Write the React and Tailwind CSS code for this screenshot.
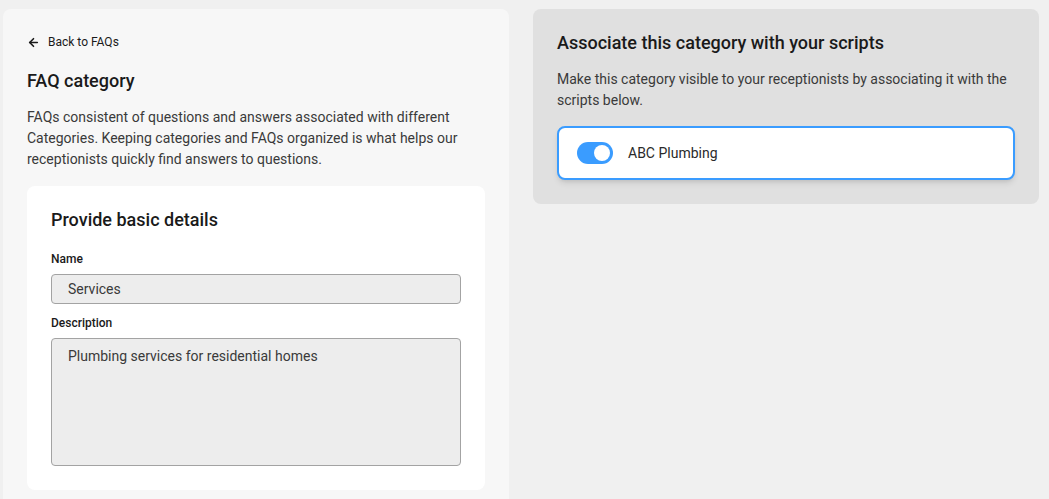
import React from 'react';
import { ArrowLeft } from 'lucide-react';

const Toggle = () => (
  <div className="w-9 h-[22px] rounded-full bg-[#3a9cff] flex items-center justify-end px-[3px]">
    <div className="w-4 h-4 rounded-full bg-white"></div>
  </div>
);

const App = () => {
  return (
    <div className="min-h-screen bg-[#f0f0f0] pl-[3px] pt-[9px] font-['Roboto',sans-serif] text-[#1a1a1a]">
      <div className="flex gap-6 items-start">
        {/* Left panel */}
        <div className="w-[506px] bg-[#f7f7f7] rounded-lg px-6 pt-6 pb-6">
          <button className="flex items-center gap-2 text-xs text-[#1a1a1a] h-[18px]">
            <ArrowLeft size={13} strokeWidth={3} />
            <span>Back to FAQs</span>
          </button>
          <h1 className="mt-[18px] text-lg font-medium leading-6">FAQ category</h1>
          <p className="mt-[14px] text-sm leading-[21px] text-[#3a3a3a]">
            FAQs consistent of questions and answers associated with different Categories. Keeping categories and FAQs organized is what helps our receptionists quickly find answers to questions.
          </p>

          <div className="mt-[16px] bg-white rounded-lg px-6 pt-[22px] pb-6">
            <h2 className="text-lg font-medium leading-6">Provide basic details</h2>
            <label className="block mt-[19px] text-xs font-medium leading-4">Name</label>
            <div className="mt-[7px] h-[30px] bg-[#ededed] border border-[#a3a3a3] rounded flex items-center px-4 text-sm text-[#3a3a3a]">
              Services
            </div>
            <label className="block mt-[11px] text-xs font-medium leading-4">Description</label>
            <div className="mt-[7px] h-[128px] bg-[#ededed] border border-[#a3a3a3] rounded px-4 pt-[7px] text-sm text-[#3a3a3a]">
              Plumbing services for residential homes
            </div>
          </div>
        </div>

        {/* Right panel */}
        <div className="w-[506px] bg-[#e0e0e0] rounded-lg px-6 pt-[22px] pb-6">
          <h2 className="text-lg font-medium leading-6">Associate this category with your scripts</h2>
          <p className="mt-[14px] text-sm leading-[21px] text-[#3a3a3a]">
            Make this category visible to your receptionists by associating it with the scripts below.
          </p>
          <div className="mt-[15px] h-[54px] bg-white border-2 border-[#3a9cff] rounded-lg shadow-md flex items-center gap-[15px] px-[18px]">
            <Toggle />
            <span className="text-sm text-[#2a2a2a]">ABC Plumbing</span>
          </div>
        </div>
      </div>
    </div>
  );
};

export default App;
